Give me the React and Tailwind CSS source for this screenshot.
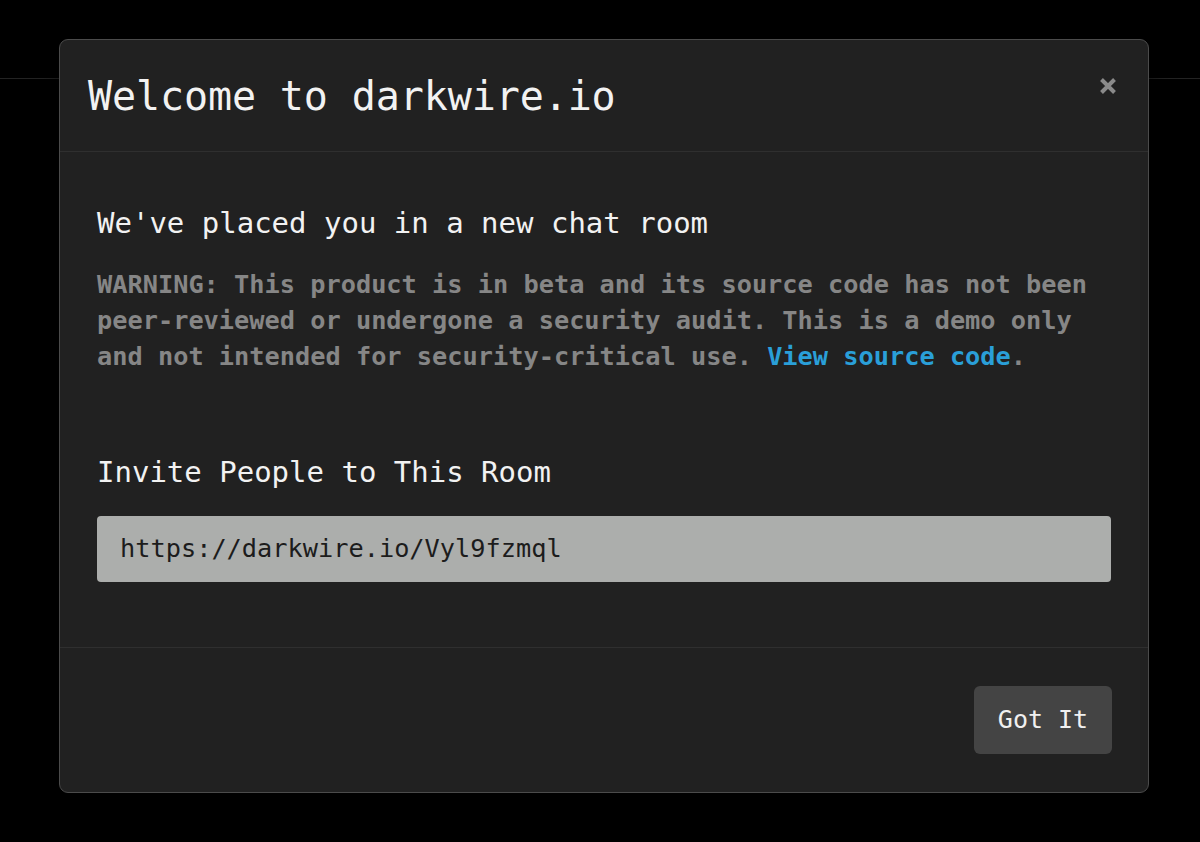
const mono = { fontFamily: '"DejaVu Sans Mono", "Liberation Mono", monospace' };

const CloseIcon = () => (
    <svg width="18" height="18" viewBox="0 0 18 18" fill="none">
        <path d="M2.5 2.5 L15.5 15.5 M15.5 2.5 L2.5 15.5" stroke="#8a8a8a" strokeWidth="4" strokeLinecap="butt" />
    </svg>
);

export default function App() {
    return (
        <div className="relative h-[842px] w-full bg-black overflow-hidden" style={mono}>
            <div className="h-[79px] border-b border-[#232323]" />

            <div className="absolute left-[59px] top-[39px] w-[1090px] h-[754px] flex flex-col rounded-[9px] border-[1.5px] border-[#4b4b4b] bg-[#212121] shadow-[0_4px_24px_rgba(0,0,0,0.6)]">
                <div className="h-[112px] shrink-0 flex items-center justify-between pl-[28px] pr-[31px] border-b border-[#2f2f2f]">
                    <h1 className="text-[40px] leading-none text-[#f2f2f2] tracking-[-0.1px]">Welcome to darkwire.io</h1>
                    <button className="self-start mt-[37px]">
                        <CloseIcon />
                    </button>
                </div>

                <div className="flex flex-col px-[37px] pt-[54px] pb-[65px] border-b border-[#2f2f2f]">
                    <h2 className="text-[29px] leading-[35px] text-[#f2f2f2]">We've placed you in a new chat room</h2>
                    <p className="mt-[26px] text-[25.3px] leading-[36px] font-bold text-[#868686]">
                        WARNING: This product is in beta and its source code has not been peer-reviewed or undergone a security audit. This is a demo only and not intended for security-critical use.{' '}
                        <a className="text-[#2a9fd8]">View source code</a>.
                    </p>

                    <h2 className="mt-[80px] text-[29px] leading-[35px] text-[#f2f2f2]">Invite People to This Room</h2>
                    <div className="mt-[26px] h-[66px] flex items-center rounded-[4px] bg-[#acaeac] px-[23px] text-[25.3px] text-[#1c1c1c]">
                        https://darkwire.io/Vyl9fzmql
                    </div>
                </div>

                <div className="flex-1 flex items-center justify-end pr-[36px]">
                    <button className="h-[68px] w-[138px] rounded-[6px] bg-[#444444] text-[25px] text-[#f0f0f0]">Got It</button>
                </div>
            </div>
        </div>
    );
}
